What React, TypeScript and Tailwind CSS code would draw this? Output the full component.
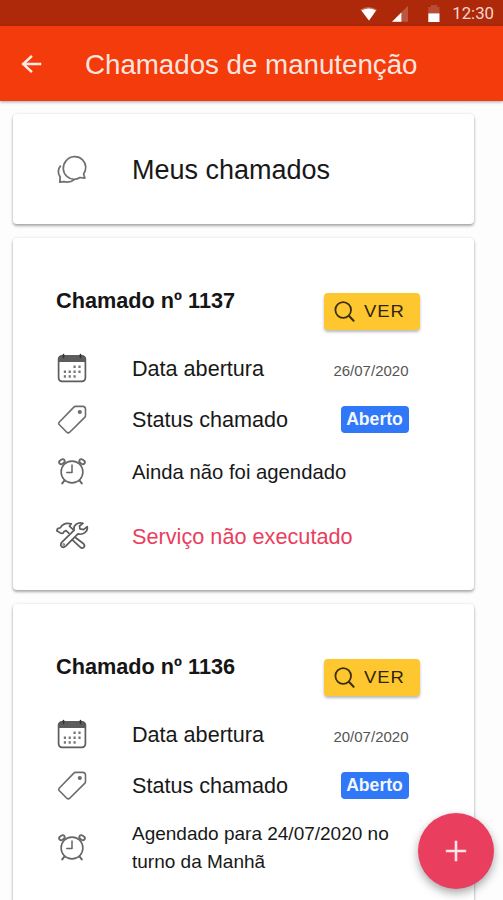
import type { ReactNode } from 'react';

const line = {
  fill: 'none',
  stroke: '#5c5c5c',
  strokeWidth: 1.5,
  strokeLinecap: 'round' as const,
  strokeLinejoin: 'round' as const,
};

function ChatIcon() {
  return (
    <svg viewBox="0 0 32 32" className="h-8 w-8" {...line} stroke="#707070">
      <path d="M28.9 25.2 27.6 21C30.8 16.4 30.4 10.7 26.6 6.8 22 2.3 14.3 2.7 10 7.9 6.1 12.6 6.4 19.5 10.9 23.4 14.8 26.9 20 27.1 24 24.5Z" strokeWidth="1.7" />
      <path d="M4.4 13.2C1.9 16 1.6 20.6 4.1 23.9L3.9 29.2 7.9 28.7C12 29.5 15.6 28.8 18 26.9" strokeWidth="1.8" />
    </svg>
  );
}

function CalendarIcon() {
  const dots = [
    [17.5, 12.5], [22.4, 12.5],
    [7.8, 17.5], [12.6, 17.5], [17.5, 17.5], [22.4, 17.5],
    [7.8, 22.2], [12.6, 22.2], [17.5, 22.2],
  ];
  return (
    <svg viewBox="0 0 32 32" className="h-8 w-8" {...line}>
      <path d="M2.6 9V5.8Q2.6 2.8 5.6 2.8H26.4Q29.4 2.8 29.4 5.8V9Z" fill="#5c5c5c" stroke="none" />
      <rect x="2.6" y="2.8" width="26.8" height="25.6" rx="3.3" strokeWidth="1.7" />
      <path d="M7.5 1.5V4.3M24.5 1.5V4.3" stroke="#333333" strokeWidth="1.7" />
      {dots.map(([x, y]) => (
        <rect key={`${x}-${y}`} x={x} y={y} width="2.2" height="2.5" fill="#777777" stroke="none" />
      ))}
    </svg>
  );
}

function TagIcon() {
  return (
    <svg viewBox="0 0 32 32" className="h-8 w-8" {...line} stroke="#6c6c6c" strokeWidth="1.6">
      <path d="M19.6 2.4H26.6Q29.5 2.4 29.5 5.3V11.4Q29.5 12.6 28.7 13.4L13.7 28.2Q12.2 29.6 10.8 28.2L3.4 20.8Q2 19.4 3.4 18L17.6 3.4Q18.5 2.4 19.6 2.4Z" />
      <circle cx="23.8" cy="8" r="1.3" fill="#777777" />
    </svg>
  );
}

function AlarmIcon() {
  return (
    <svg viewBox="0 0 32 32" className="h-8 w-8" {...line} stroke="#666666">
      <circle cx="16" cy="16" r="10.9" strokeWidth="1.6" />
      <path d="M16 9V16.6H10.8" strokeWidth="1.5" />
      <path d="M8.6 24.4 6.2 27.4M23.4 24.4 25.8 27.4" strokeWidth="2" />
      <ellipse cx="5.9" cy="5.7" rx="3" ry="2.1" transform="rotate(-32 5.9 5.7)" strokeWidth="1.8" />
      <ellipse cx="26.1" cy="5.7" rx="3" ry="2.1" transform="rotate(32 26.1 5.7)" strokeWidth="1.8" />
    </svg>
  );
}

function ToolsIcon() {
  return (
    <svg viewBox="0 0 34 32" className="-ml-px h-8 w-[34px]" {...line} strokeWidth="1.7">
      <path d="M13.8 13.2 11 10.6 8.8 11.8 8.2 13.2 6 13.4 1.8 10.8 2.6 8.6 5.3 7.8C7.4 4.1 11.4 2.5 16.3 3.8L14.4 6.2 18.2 9.6" />
      <path d="M20.7 17.8 28.6 23.8C31 26.2 27.8 29.6 25.2 27.2L17.6 20.2" />
      <path d="M28 3.4C23.2 1.5 17.7 5.2 19.2 10.2L7 22.2C3.8 25.3 7.5 28.9 10.7 26.2L22.9 13.9C28 15.3 33.4 11.6 32.2 6.6L28.5 9.6 24.9 8.9 24.5 6Z" />
      <circle cx="8.7" cy="24.4" r=".4" />
    </svg>
  );
}

function SearchIcon() {
  return (
    <svg viewBox="0 0 24 24" className="h-6 w-6" fill="none" stroke="#3a2f0e" strokeWidth="1.8" strokeLinecap="round">
      <circle cx="10.2" cy="10" r="7.8" />
      <path d="m15.9 15.8 4.7 4.9" strokeWidth="2.1" />
    </svg>
  );
}

function StatusBar() {
  return (
    <div className="flex h-[26px] shrink-0 items-center justify-end bg-[#ad290a] pr-[9px] font-[Roboto,sans-serif]">
      <svg viewBox="0 0 18 16" className="mr-[14px] mt-px h-4 w-[18px]">
        <path d="M1.4 3.4Q9-1.6 18 3.4L10 14.8Z" fill="#c56a56" />
        <path d="M2.4 4.4Q10 .8 17 4.4L10 14.5Z" fill="#fff" />
      </svg>
      <svg viewBox="0 0 18 18" className="mr-[17px] mt-px h-[18px] w-[18px]">
        <path d="M1 16.8 17 .8V16.8Z" fill="#bc5640" />
        <path d="M1 16.8 10.4 7.5V16.8Z" fill="#fff" />
      </svg>
      <svg viewBox="0 0 14 18" className="mr-[12px] mt-px h-[18px] w-[14px]">
        <path d="M5 0H11V2H13.5V9H2.3V2H5Z" fill="#b84c35" />
        <path d="M2.3 8.4H13.5V17H2.3Z" fill="#fff" />
      </svg>
      <span className="mt-px text-[16.8px] leading-none text-[#f7d5cd]">12:30</span>
    </div>
  );
}

function Header() {
  return (
    <header className="z-10 flex h-[75px] shrink-0 items-center bg-[#f33b0c] pl-[20px] shadow-[0_1px_3px_rgba(0,0,0,0.35)]">
      <svg viewBox="0 0 24 24" className="h-6 w-6" fill="none" stroke="#ffeae5" strokeWidth="2.5" strokeLinecap="square">
        <path d="M3.5 12H20M11 4.8 3.2 12 11 19.2" />
      </svg>
      <h1 className="ml-[41px] mt-[2px] whitespace-nowrap text-[27.7px] leading-[34px] text-[#ffe5df]">Chamados de manutenção</h1>
    </header>
  );
}

function Card({ className, children }: { className: string; children: ReactNode }) {
  return (
    <section className={`w-[461px] shrink-0 rounded bg-white shadow-[0_2px_3px_rgba(0,0,0,0.32),0_0_3px_rgba(0,0,0,0.1)] ${className}`}>
      {children}
    </section>
  );
}

function Row({ icon, className, children }: { icon: ReactNode; className: string; children: ReactNode }) {
  return (
    <div className={`flex items-center pl-[43.5px] ${className}`}>
      <div className="w-[76px] shrink-0">{icon}</div>
      {children}
    </div>
  );
}

type Ticket = { id: string; date: string };

function TicketTop({ id, date }: Ticket) {
  return (
    <>
      <div className="flex h-[97px] items-start justify-between pl-[43.5px] pr-[53.5px]">
        <h2 className="mt-[50px] text-[21.7px] font-bold leading-[26px] text-[#151515]">Chamado nº {id}</h2>
        <button className="mt-[55px] flex h-[37px] w-[96px] items-center rounded bg-[#ffc72f] pl-[9px] shadow-[0_2px_3px_rgba(0,0,0,0.28)]">
          <SearchIcon />
          <span className="ml-[7px] mt-px origin-left scale-x-110 text-[16.8px] leading-none tracking-[0.9px] text-[#2c240e]">VER</span>
        </button>
      </div>
      <Row icon={<CalendarIcon />} className="mt-[8px] h-[52px] pr-[65px]">
        <span className="text-[21.6px] leading-[28px]">Data abertura</span>
        <span className="ml-auto mt-1 text-[15px] text-[#555555]">{date}</span>
      </Row>
      <Row icon={<TagIcon />} className="h-[50px] pr-[65px]">
        <span className="text-[21.6px] leading-[28px]">Status chamado</span>
        <span className="-mt-[2px] ml-auto flex h-[27px] w-[68px] items-center justify-center rounded bg-[#3078f7] text-[17.6px] font-bold text-[#f2f7ff]">Aberto</span>
      </Row>
    </>
  );
}

export default function App() {
  return (
    <div className="relative flex h-[900px] w-[503px] flex-col overflow-hidden bg-[#fdfdfd] font-['Liberation_Sans',Arial,sans-serif] text-[#181818]">
      <StatusBar />
      <Header />
      <main className="flex min-h-0 flex-1 flex-col gap-[14px] overflow-hidden pl-[12.5px] pt-[13px]">
        <Card className="flex h-[110px] items-center">
          <Row icon={<ChatIcon />} className="">
            <span className="mt-[2px] text-[27px] leading-[34px]">Meus chamados</span>
          </Row>
        </Card>
        <Card className="h-[352px]">
          <TicketTop id="1137" date="26/07/2020" />
          <Row icon={<AlarmIcon />} className="h-[53px]">
            <span className="text-[20.3px] leading-[28px]">Ainda não foi agendado</span>
          </Row>
          <Row icon={<ToolsIcon />} className="mt-[12px] h-[52px]">
            <span className="mt-px text-[21.7px] leading-[28px] text-[#e93e5d]">Serviço não executado</span>
          </Row>
        </Card>
        <Card className="h-[352px]">
          <TicketTop id="1136" date="20/07/2020" />
          <Row icon={<AlarmIcon />} className="mt-[5px] h-[64px] pr-[60px]">
            <span className="whitespace-nowrap text-[19px] leading-[28px]">
              Agendado para 24/07/2020 no
              <br />
              turno da Manhã
            </span>
          </Row>
        </Card>
      </main>
      <button aria-label="Adicionar" className="absolute left-[418px] top-[813px] z-20 flex h-[76px] w-[76px] items-center justify-center rounded-full bg-[#e93e5d] shadow-[0_4px_10px_rgba(0,0,0,0.35)]">
        <svg viewBox="0 0 22 22" className="h-[22px] w-[22px]" stroke="#ffe3e8" strokeWidth="2.6">
          <path d="M11 .8V21.2M.8 11H21.2" />
        </svg>
      </button>
    </div>
  );
}
